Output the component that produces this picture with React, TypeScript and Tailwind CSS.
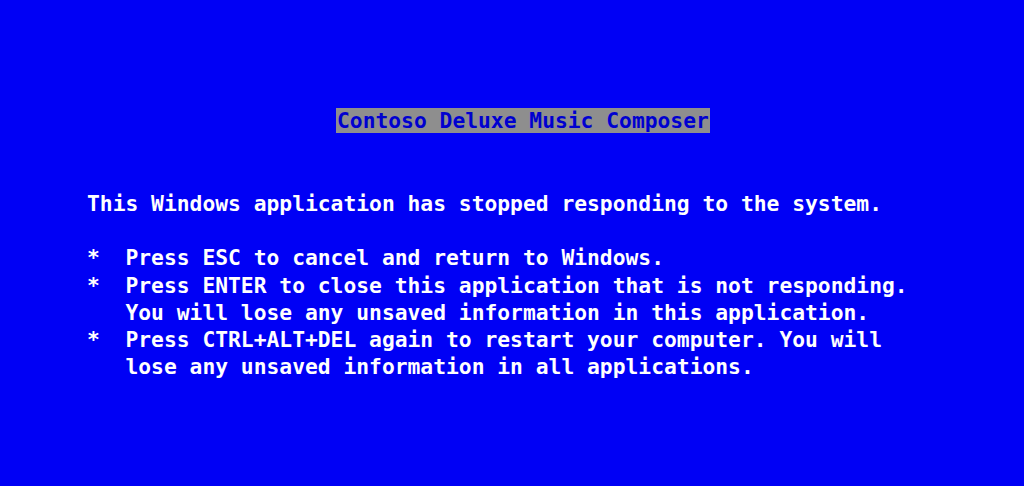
export default function App() {
    const lines = [
        "*  Press ESC to cancel and return to Windows.",
        "*  Press ENTER to close this application that is not responding.",
        "   You will lose any unsaved information in this application.",
        "*  Press CTRL+ALT+DEL again to restart your computer. You will",
        "   lose any unsaved information in all applications.",
    ];
    return (
        <div className="w-full h-[486px] bg-[#0000f5] overflow-hidden font-['DejaVu_Sans_Mono','Liberation_Mono',monospace] font-bold text-[21.3px] text-white pl-[87px] pt-[108px]">
            <div className="ml-[249px] w-fit bg-[#8e8e8e] text-[#0000d0] leading-[25px] whitespace-pre px-[1px]">
                Contoso Deluxe Music Composer
            </div>
            <div className="mt-[57px] leading-[27.25px] whitespace-pre">
                This Windows application has stopped responding to the system.
            </div>
            <div className="mt-[27px] flex flex-col leading-[27.25px] whitespace-pre">
                {lines.map((line, i) => (
                    <div key={i}>{line}</div>
                ))}
            </div>
        </div>
    );
}
